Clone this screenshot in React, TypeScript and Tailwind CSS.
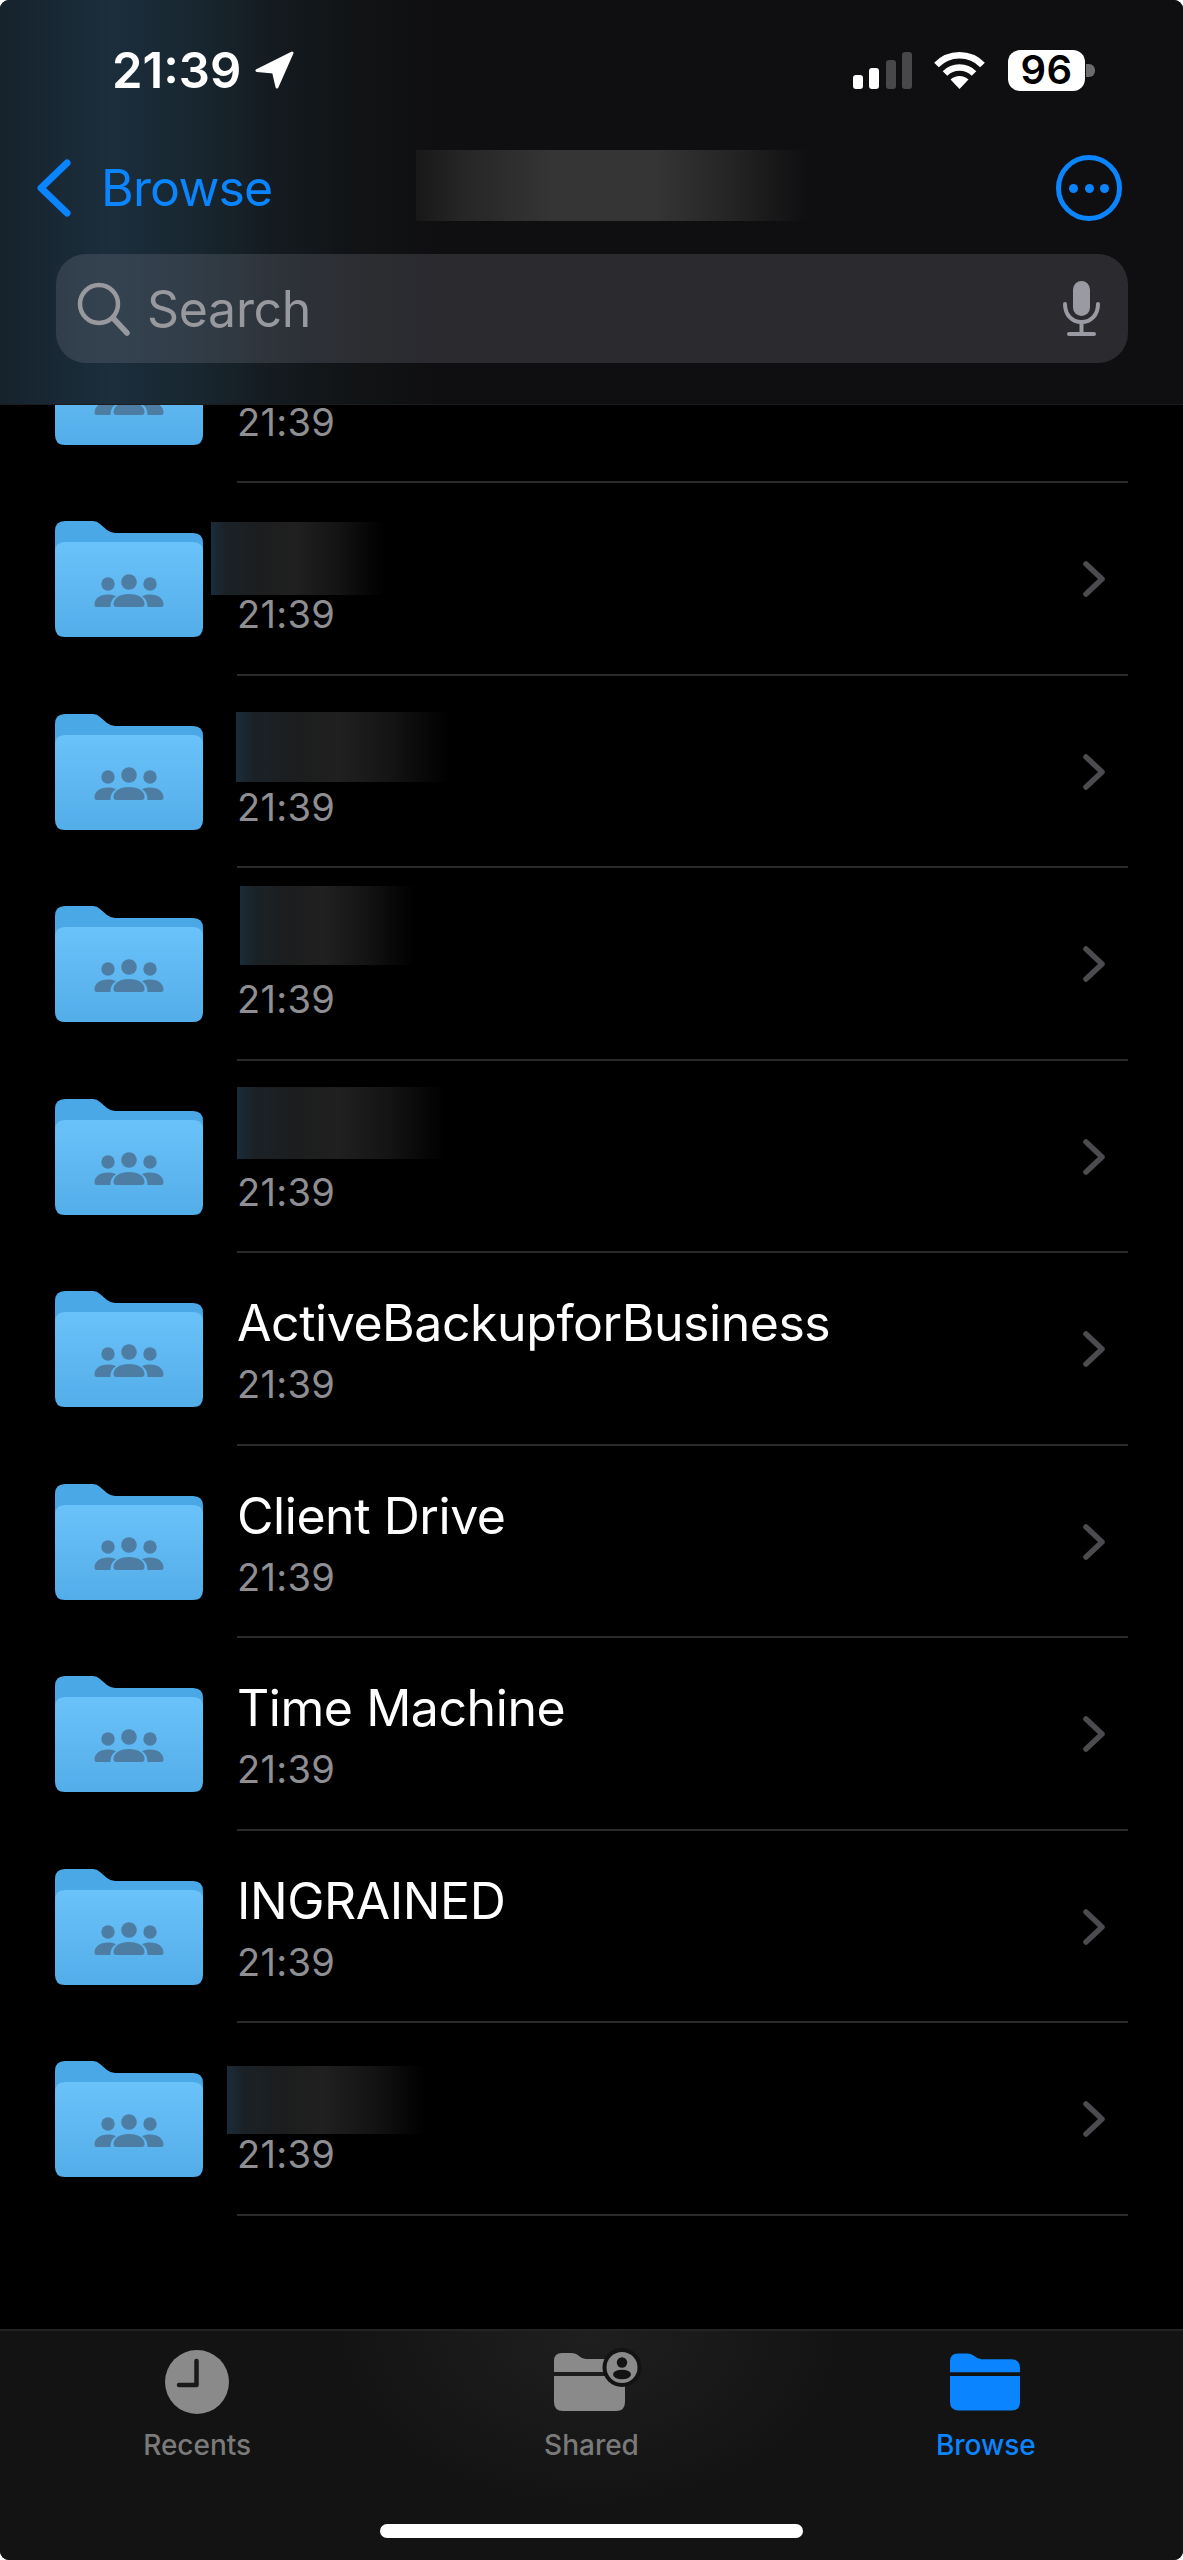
const rows = [
  { name: "" },
  { name: "", blur: "left-[-26px] top-[39px] h-[73px] w-[175px]" },
  { name: "", blur: "left-[-1px] top-[36px] h-[70px] w-[215px]" },
  { name: "", blur: "left-[3px] top-[18px] h-[79px] w-[175px]" },
  { name: "", blur: "left-[0px] top-[26px] h-[72px] w-[210px]" },
  { name: "ActiveBackupforBusiness" },
  { name: "Client Drive" },
  { name: "Time Machine" },
  { name: "INGRAINED" },
  { name: "", blur: "left-[-10px] top-[43px] h-[68px] w-[200px]" },
];

const FolderIcon = () => (
  <svg viewBox="0 0 148 116" className="h-[116px] w-[148px] shrink-0">
    <defs>
      <linearGradient id="front" x1="0" y1="0" x2="0" y2="1">
        <stop offset="0" stopColor="#6ac2fa" />
        <stop offset="1" stopColor="#53ade8" />
      </linearGradient>
    </defs>
    <path d="M0 10Q0 0 10 0H38Q42 0 45 3L52 9Q56 12 60 12H138Q148 12 148 22V60H0Z" fill="#4aa8e6" />
    <path d="M0 31Q0 21 10 21H138Q148 21 148 31V106Q148 116 138 116H10Q0 116 0 106Z" fill="url(#front)" />
    <g fill="#4d7da3">
      <circle cx="53" cy="63" r="6.7" />
      <circle cx="95" cy="63" r="6.7" />
      <circle cx="74" cy="61" r="7.8" />
      <path d="M58.5 83C58.5 77 65 73 74 73C83 73 89.5 77 89.5 83Q89.5 86 86.5 86H61.5Q58.5 86 58.5 83Z" />
      <path d="M39.5 83.5C39.5 77.5 45 73.5 53 73.5C56 73.5 59 74 61 75.5C57 77.5 55.5 81 55.5 86H42Q39.5 86 39.5 83.5Z" />
      <path d="M108.5 83.5C108.5 77.5 103 73.5 95 73.5C92 73.5 89 74 87 75.5C91 77.5 92.5 81 92.5 86H106Q108.5 86 108.5 83.5Z" />
    </g>
  </svg>
);

const TabFolder = ({ color, badge }: { color: string; badge?: boolean }) => (
  <svg viewBox="0 0 72 58" className={badge ? "-ml-[3px] h-[58px] w-[72px] overflow-visible" : "h-[58px] w-[71px]"}>
    <g fill={color}>
      <path d="M0 19V8Q0 0 8 0H17Q22 0 25 3Q28 6 32 6H62Q71 6 71 15V19Z" />
      <path d="M0 23H71V49Q71 58 62 58H9Q0 58 0 49Z" />
    </g>
    {badge && (
      <g>
        <circle cx="68" cy="14.5" r="19.5" fill="#131313" />
        <circle cx="68" cy="14.5" r="15.5" fill={color} />
        <circle cx="68" cy="9.5" r="5.2" fill="#131313" />
        <ellipse cx="68" cy="21.5" rx="9" ry="4.8" fill="#131313" />
      </g>
    )}
  </svg>
);

const Row = ({ name, blur }: { name: string; blur?: string }) => (
  <div className="relative flex h-[192.5px] items-center pl-[55px] pr-[55px]">
    <FolderIcon />
    <div className="relative ml-[34px] flex h-full flex-1 items-center justify-between self-stretch border-b-2 border-[#2a2a2c]">
      <div className="flex h-full flex-col pt-[39px]">
        <div className="h-[62px] text-[50px] leading-[62px] tracking-[-0.45px] text-white">{name}</div>
        <div className="mt-[15px] h-[30px] text-[38px] leading-[30px] tracking-[0.3px] text-[#8e8e93]">21:39</div>
      </div>
      <svg viewBox="0 0 22 36" className="mr-[23px] mt-[2px] h-[36px] w-[22px]" fill="none" stroke="#4b4b50" strokeWidth="5.5" strokeLinecap="round" strokeLinejoin="round">
        <path d="M3 3L19 18L3 33" />
      </svg>
      {blur && (
        <div className={`absolute bg-[linear-gradient(90deg,#1a2c3a_0%,#1a2227_8%,#1c1d1e_28%,#202020_48%,#141414_72%,#050505_92%,#000000_100%)] ${blur}`} />
      )}
    </div>
  </div>
);

export default function App() {
  return (
    <div className="h-[2560px] w-full bg-white [font-family:Inter,sans-serif]">
      <div className="flex h-full flex-col overflow-hidden rounded-[9px] bg-black">
        <header className="relative z-10 h-[405px] shrink-0 border-b border-[#1c1c1e] bg-[linear-gradient(90deg,#16222c_0px,#1b2e3c_110px,#18262f_200px,#141a1f_280px,#111315_360px,#0f0f11_440px)]">
          <div className="flex h-[140px] items-center justify-between pl-[112px] pr-[88px]">
            <div className="flex items-center gap-[14px]">
              <span className="text-[49px] font-semibold leading-none text-white">21:39</span>
              <svg viewBox="0 0 39 38" className="h-[38px] w-[39px]" fill="#fff" stroke="#fff" strokeWidth="3" strokeLinejoin="round">
                <path d="M37 2L2 19.5L18.5 21L22 36Z" />
              </svg>
            </div>
            <div className="flex items-center">
              <div className="flex h-[37px] items-end gap-[6.5px]">
                <div className="h-[14px] w-[10px] rounded-[3px] bg-white" />
                <div className="h-[21px] w-[10px] rounded-[3px] bg-white" />
                <div className="h-[29px] w-[10px] rounded-[3px] bg-[#48484a]" />
                <div className="h-[37px] w-[10px] rounded-[3px] bg-[#48484a]" />
              </div>
              <svg viewBox="0 0 53 38" className="ml-[21px] h-[38px] w-[53px]" fill="none" stroke="#fff">
                <path d="M3.5 14A32 32 0 0 1 49.5 14" strokeWidth="6.5" />
                <path d="M12 22.5A20.5 20.5 0 0 1 41 22.5" strokeWidth="6.5" />
                <path d="M26.5 38L17.5 28.5A13 13 0 0 1 35.5 28.5Z" fill="#fff" stroke="none" />
              </svg>
              <div className="ml-[22px] flex h-[41px] w-[77px] items-center justify-center rounded-[12px] bg-white text-[40px] font-semibold leading-none tracking-[0.3px] text-black">
                96
              </div>
              <div className="ml-[1px] h-[13px] w-[9px] rounded-r-[6px] bg-[#6d6d70]" />
            </div>
          </div>
          <div className="relative flex h-[96px] items-center justify-between pl-[37px] pr-[61px]">
            <div className="flex items-center gap-[30px]">
              <svg viewBox="0 0 34 58" className="h-[58px] w-[34px]" fill="none" stroke="#0a84ff" strokeWidth="7" strokeLinecap="round" strokeLinejoin="round">
                <path d="M30 4L4 29L30 54" />
              </svg>
              <span className="text-[50px] leading-none tracking-[-0.8px] text-[#0a84ff]">Browse</span>
            </div>
            <div className="absolute left-[416px] top-[10px] h-[71px] w-[396px] bg-[linear-gradient(90deg,#181818_0%,#262626_12%,#353535_35%,#353535_60%,#242424_80%,#121214_96%,#0f0f11_100%)]" />
            <div className="flex h-[66px] w-[66px] items-center justify-center gap-[6.5px] rounded-full border-[5px] border-[#0a84ff]">
              <div className="h-[9px] w-[9px] rounded-full bg-[#0a84ff]" />
              <div className="h-[9px] w-[9px] rounded-full bg-[#0a84ff]" />
              <div className="h-[9px] w-[9px] rounded-full bg-[#0a84ff]" />
            </div>
          </div>
          <div className="ml-[56px] mr-[55px] mt-[18px] flex h-[109px] items-center rounded-[30px] bg-[#8f8f9c]/[0.22] pl-[20px] pr-[28px]">
            <svg viewBox="0 0 54 54" className="h-[54px] w-[54px] shrink-0" fill="none" stroke="#98989f" strokeWidth="4.5" strokeLinecap="round">
              <circle cx="23" cy="22" r="19" />
              <path d="M37 36L51 51" strokeWidth="5.5" />
            </svg>
            <span className="ml-[17px] flex-1 text-[50px] leading-none tracking-[-0.3px] text-[#98989f]">Search</span>
            <svg viewBox="0 0 37 55" className="h-[55px] w-[37px]" fill="none" stroke="#9a9aa2" strokeWidth="4" strokeLinecap="round">
              <rect x="10" y="0" width="17" height="35" rx="8.5" fill="#9a9aa2" stroke="none" />
              <path d="M2 23C2 34 9 41 18.5 41C28 41 35 34 35 23" />
              <path d="M18.5 41V52M6 53H31" />
            </svg>
          </div>
        </header>

        <main className="min-h-0 flex-1 overflow-hidden">
          <div className="-mt-[114.5px]">
            {rows.map((row, index) => (
              <Row key={index} name={row.name} blur={row.blur} />
            ))}
          </div>
        </main>

        <nav className="flex h-[231px] shrink-0 flex-col border-t-2 border-[#232323] bg-[radial-gradient(ellipse_260px_180px_at_590px_0px,#1f1f1f_0%,#131313_100%)]">
          <div className="grid grid-cols-3 pt-[19px]">
            <div className="flex flex-col items-center">
              <svg viewBox="0 0 64 64" className="h-[64px] w-[64px]">
                <circle cx="32" cy="32" r="32" fill="#8a8a8a" />
                <path d="M31.5 11V35H14" fill="none" stroke="#1a1a1a" strokeWidth="4.5" strokeLinecap="round" strokeLinejoin="round" />
              </svg>
              <span className="mt-[11px] text-[28px] font-medium leading-[40px] text-[#7a7a7a]">Recents</span>
            </div>
            <div className="flex flex-col items-center">
              <div className="flex h-[64px] items-center">
                <TabFolder color="#8a8a8a" badge />
              </div>
              <span className="mt-[11px] text-[28px] font-medium leading-[40px] text-[#7a7a7a]">Shared</span>
            </div>
            <div className="flex flex-col items-center">
              <div className="flex h-[64px] items-center">
                <TabFolder color="#0a84ff" />
              </div>
              <span className="mt-[11px] text-[28px] font-medium leading-[40px] text-[#0a84ff]">Browse</span>
            </div>
          </div>
          <div className="mx-auto mt-[59px] h-[14px] w-[423px] rounded-full bg-white" />
        </nav>
      </div>
    </div>
  );
}
